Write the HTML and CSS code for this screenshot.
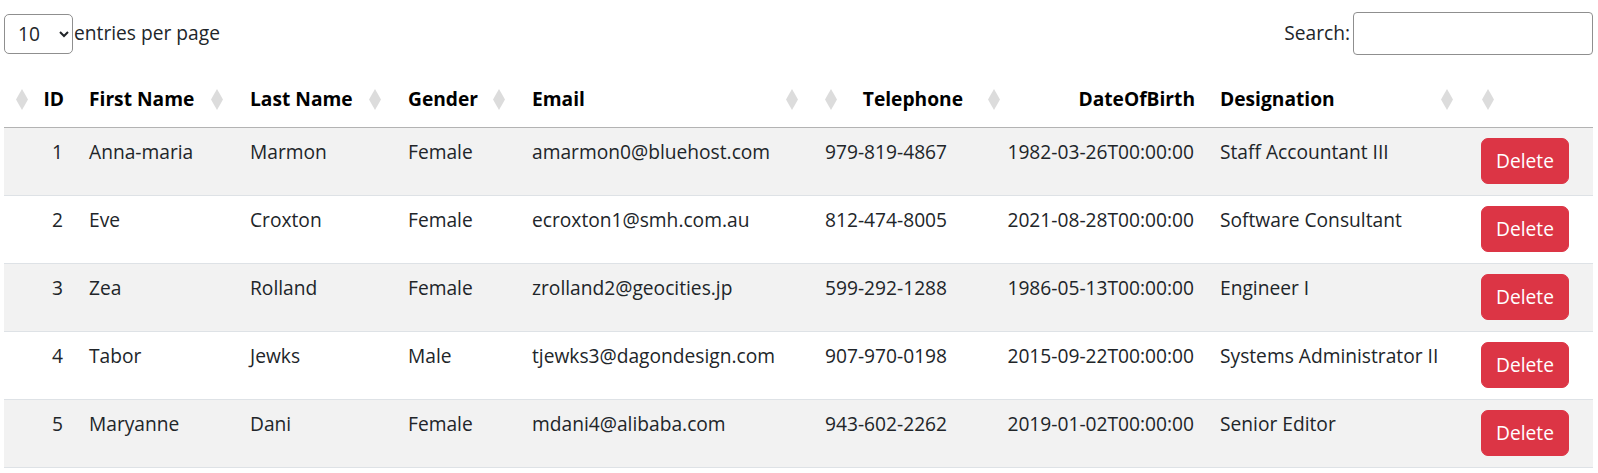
FILE: index.html
```html
<!DOCTYPE html>
<html lang="en">
<head>
    <meta charset="UTF-8">
    <meta name="viewport" content="width=device-width, initial-scale=1.0">
    <title>Employees</title>
    <link rel="stylesheet" href="styles.css">
</head>
<body>
    <div class="dt-container">
        <div class="dt-top">
            <div class="dt-length">
                <select class="length-select">
                    <option selected>10</option>
                    <option>25</option>
                    <option>50</option>
                </select>
                <label>entries per page</label>
            </div>
            <div class="dt-search">
                <label for="search">Search:</label>
                <input type="search" id="search" class="search-input">
            </div>
        </div>

        <table class="data-table">
            <colgroup>
                <col style="width: 73px">
                <col style="width: 161px">
                <col style="width: 158px">
                <col style="width: 124px">
                <col style="width: 293px">
                <col style="width: 163px">
                <col style="width: 232px">
                <col style="width: 260px">
                <col style="width: 125px">
            </colgroup>
            <thead>
                <tr>
                    <th class="num"><div class="col-head"><svg class="sort-icon" viewBox="0 0 12 21"><path d="M6 0 L12 10.5 L6 21 L0 10.5 Z"/></svg><span>ID</span></div></th>
                    <th><div class="col-head"><span>First Name</span><svg class="sort-icon" viewBox="0 0 12 21"><path d="M6 0 L12 10.5 L6 21 L0 10.5 Z"/></svg></div></th>
                    <th><div class="col-head"><span>Last Name</span><svg class="sort-icon" viewBox="0 0 12 21"><path d="M6 0 L12 10.5 L6 21 L0 10.5 Z"/></svg></div></th>
                    <th><div class="col-head"><span>Gender</span><svg class="sort-icon" viewBox="0 0 12 21"><path d="M6 0 L12 10.5 L6 21 L0 10.5 Z"/></svg></div></th>
                    <th><div class="col-head"><span>Email</span><svg class="sort-icon" viewBox="0 0 12 21"><path d="M6 0 L12 10.5 L6 21 L0 10.5 Z"/></svg></div></th>
                    <th class="num"><div class="col-head"><svg class="sort-icon" viewBox="0 0 12 21"><path d="M6 0 L12 10.5 L6 21 L0 10.5 Z"/></svg><span>Telephone</span></div></th>
                    <th class="num"><div class="col-head"><svg class="sort-icon" viewBox="0 0 12 21"><path d="M6 0 L12 10.5 L6 21 L0 10.5 Z"/></svg><span>DateOfBirth</span></div></th>
                    <th><div class="col-head"><span>Designation</span><svg class="sort-icon" viewBox="0 0 12 21"><path d="M6 0 L12 10.5 L6 21 L0 10.5 Z"/></svg></div></th>
                    <th class="num action"><div class="col-head"><svg class="sort-icon" viewBox="0 0 12 21"><path d="M6 0 L12 10.5 L6 21 L0 10.5 Z"/></svg><span></span></div></th>
                </tr>
            </thead>
            <tbody>
                <tr>
                    <td class="num">1</td>
                    <td>Anna-maria</td>
                    <td>Marmon</td>
                    <td>Female</td>
                    <td>amarmon0@bluehost.com</td>
                    <td>979-819-4867</td>
                    <td class="num">1982-03-26T00:00:00</td>
                    <td>Staff Accountant III</td>
                    <td class="action"><button class="btn-delete">Delete</button></td>
                </tr>
                <tr>
                    <td class="num">2</td>
                    <td>Eve</td>
                    <td>Croxton</td>
                    <td>Female</td>
                    <td>ecroxton1@smh.com.au</td>
                    <td>812-474-8005</td>
                    <td class="num">2021-08-28T00:00:00</td>
                    <td>Software Consultant</td>
                    <td class="action"><button class="btn-delete">Delete</button></td>
                </tr>
                <tr>
                    <td class="num">3</td>
                    <td>Zea</td>
                    <td>Rolland</td>
                    <td>Female</td>
                    <td>zrolland2@geocities.jp</td>
                    <td>599-292-1288</td>
                    <td class="num">1986-05-13T00:00:00</td>
                    <td>Engineer I</td>
                    <td class="action"><button class="btn-delete">Delete</button></td>
                </tr>
                <tr>
                    <td class="num">4</td>
                    <td>Tabor</td>
                    <td>Jewks</td>
                    <td>Male</td>
                    <td>tjewks3@dagondesign.com</td>
                    <td>907-970-0198</td>
                    <td class="num">2015-09-22T00:00:00</td>
                    <td>Systems Administrator II</td>
                    <td class="action"><button class="btn-delete">Delete</button></td>
                </tr>
                <tr>
                    <td class="num">5</td>
                    <td>Maryanne</td>
                    <td>Dani</td>
                    <td>Female</td>
                    <td>mdani4@alibaba.com</td>
                    <td>943-602-2262</td>
                    <td class="num">2019-01-02T00:00:00</td>
                    <td>Senior Editor</td>
                    <td class="action"><button class="btn-delete">Delete</button></td>
                </tr>
            </tbody>
        </table>
    </div>
</body>
</html>
```

FILE: styles.css
```css
/* General Styles */
body {
    margin: 0;
    padding: 0;
    font-family: 'Open Sans', 'Noto Sans', sans-serif;
    font-size: 19.2px;
    line-height: 28.8px;
    color: #212529;
    background: #ffffff;
}

.dt-container {
    padding: 12px 5px 0 4px;
}

/* Top controls */
.dt-top {
    display: flex;
    justify-content: space-between;
    align-items: center;
    height: 43px;
}

.dt-length,
.dt-search {
    display: flex;
    align-items: center;
}

.length-select {
    width: 69px;
    height: 40px;
    padding: 0 6px 0 9px;
    margin-right: 1px;
    font-family: inherit;
    font-size: 19.2px;
    color: #212529;
    background: #ffffff;
    border: 1px solid #8f8f8f;
    border-radius: 5px;
}

.search-input {
    width: 240px;
    height: 43px;
    margin-left: 3px;
    padding: 0 10px;
    font-family: inherit;
    font-size: 19.2px;
    border: 1px solid #8f8f8f;
    border-radius: 4px;
    box-sizing: border-box;
}

/* Table */
.data-table {
    width: 1589px;
    margin-top: 18px;
    table-layout: fixed;
    border-collapse: collapse;
}

.data-table th {
    padding: 12px 15px 13px 12px;
    font-weight: 700;
    color: #000000;
    text-align: left;
    vertical-align: bottom;
    border-bottom: 1px solid #b3b3b3;
}

.data-table th.num {
    padding: 12px 13px 13px 12px;
}

.data-table th.action {
    padding-left: 14px;
}

.col-head {
    display: flex;
    justify-content: space-between;
    align-items: center;
    min-height: 28.8px;
    white-space: nowrap;
}

.sort-icon {
    width: 12px;
    height: 21px;
    flex: none;
    fill: #dcdcdc;
}

.data-table td {
    padding: 10px 12px 11px;
    vertical-align: top;
    white-space: nowrap;
    border-bottom: 1px solid #dee2e6;
}

.data-table td.num {
    text-align: right;
    padding-right: 14px;
}

.data-table td.action {
    padding-left: 13px;
}

.data-table tbody tr:nth-child(odd) td {
    background: #f2f2f2;
}

.btn-delete {
    display: inline-block;
    padding: 8px 14px;
    font-family: inherit;
    font-size: 19.2px;
    line-height: 28px;
    color: #ffffff;
    background-color: #dc3545;
    border: 1px solid #dc3545;
    border-radius: 7px;
    cursor: pointer;
}

.btn-delete:hover {
    background-color: #bb2d3b;
}
```
